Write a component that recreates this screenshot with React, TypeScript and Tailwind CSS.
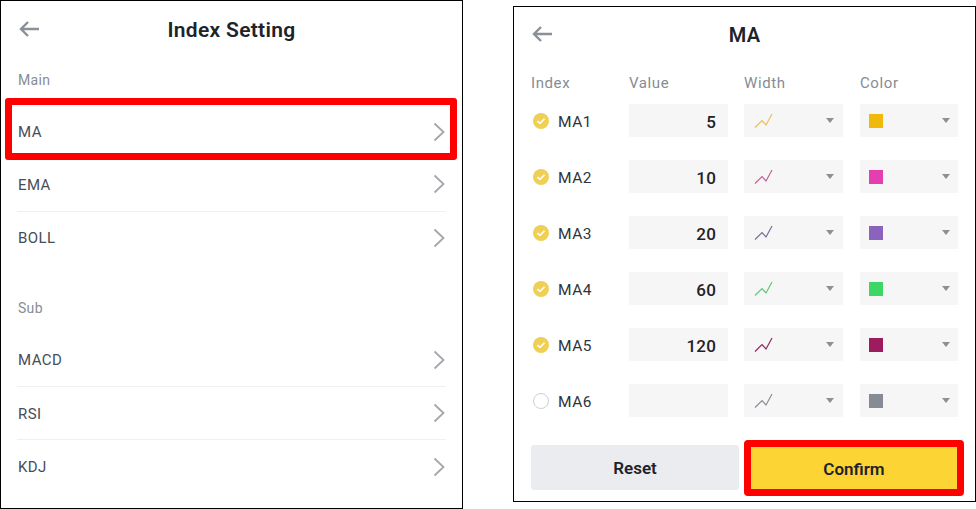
const font = "[font-family:'Roboto','Liberation_Sans',sans-serif]";

function Back() {
  return (
    <svg width="22" height="18" viewBox="0 0 22 18" fill="none" stroke="#8a8f98" strokeWidth="2.4">
      <path d="M21 9H3M10 2L3 9l7 7" />
    </svg>
  );
}

function Chevron() {
  return (
    <svg width="12" height="20" viewBox="0 0 12 20" fill="none" stroke="#a3a6ab" strokeWidth="1.8">
      <path d="M1.5 1.5L10.5 10L1.5 18.5" />
    </svg>
  );
}

function Item({ label, line, boxed }: { label: string; line?: boolean; boxed?: boolean }) {
  return (
    <div className="relative h-[53.3px] mx-[16px]">
      <div className={`h-full flex items-center justify-between pl-[1px] pr-[1px] ${line ? "border-b border-[#f0f0f0]" : ""}`}>
        <span className="pt-[1px] text-[15px] tracking-[0.4px] text-[#474d57]">{label}</span>
        <Chevron />
      </div>
      {boxed && (
        <div className="absolute left-[-12px] right-[-11px] top-[-7px] bottom-[-2px] border-[7px] border-[#fe0000] rounded-[3px]" />
      )}
    </div>
  );
}

function Check({ on }: { on: boolean }) {
  if (!on) return <div className="w-[16px] h-[16px] rounded-full border border-[#cdd0d4] bg-white" />;
  return (
    <svg width="16" height="16" viewBox="0 0 16 16">
      <circle cx="8" cy="8" r="8" fill="#efcf55" />
      <path d="M4.5 8.2L7 10.5L11.5 5.8" fill="none" stroke="#fff" strokeWidth="1.6" />
    </svg>
  );
}

function Caret() {
  return (
    <svg width="8" height="5" viewBox="0 0 8 5">
      <path d="M0 0H8L4 5Z" fill="#8b8f96" />
    </svg>
  );
}

function Row({ name, value, on, line, swatch }: { name: string; value: string; on: boolean; line: string; swatch: string }) {
  return (
    <div className="flex items-center h-[33px] mb-[23px]">
      <div className="w-[98px] flex items-center">
        <div className="ml-[2px] mr-[9px] flex"><Check on={on} /></div>
        <span className="pt-[5px] text-[15.5px] tracking-[0.5px] text-[#2f343c]">{name}</span>
      </div>
      <div className="w-[99px] h-[33px] bg-[#f6f6f6] flex items-center justify-end pt-[5px] pr-[12px] text-[17px] tracking-[0.2px] text-[#1e2329] font-medium">
        {value}
      </div>
      <div className="w-[99px] h-[33px] ml-[16px] bg-[#f6f6f6] flex items-center justify-between pl-[10px] pr-[9px]">
        <svg width="19" height="16" viewBox="0 0 19 16" fill="none" stroke={line} strokeWidth="1.2">
          <path d="M1 14.5L8 7.5L12 12L18 1" />
        </svg>
        <Caret />
      </div>
      <div className="w-[98px] h-[33px] ml-[17px] bg-[#f6f6f6] flex items-center justify-between pl-[9px] pr-[8px]">
        <div className="w-[14px] h-[14px]" style={{ backgroundColor: swatch }} />
        <Caret />
      </div>
    </div>
  );
}

export default function App() {
  return (
    <div className={`w-[976px] h-[509px] bg-white flex items-start overflow-hidden ${font}`}>
      <div className="w-[463px] h-[509px] shrink-0 border border-black bg-white">
        <div className="relative h-[54px] flex items-center justify-center pt-[5px]">
          <div className="absolute left-[17px] top-[19px] flex"><Back /></div>
          <span className="text-[21px] font-semibold tracking-[0.3px] text-[#1e2329]">Index Setting</span>
        </div>
        <div className="h-[50px] pl-[17px] pt-[15px] text-[14px] text-[#878c94] tracking-[0.3px]">Main</div>
        <Item label="MA" boxed />
        <Item label="EMA" line />
        <Item label="BOLL" />
        <div className="h-[69px] pl-[17px] pt-[33px] text-[14px] text-[#878c94] tracking-[0.3px]">Sub</div>
        <Item label="MACD" line />
        <Item label="RSI" line />
        <Item label="KDJ" />
      </div>
      <div className="w-[463px] h-[496px] mt-[6px] ml-[50px] shrink-0 border border-black bg-white px-[17px]">
        <div className="relative h-[55px] flex items-center justify-center">
          <div className="absolute left-0 top-[18px] flex"><Back /></div>
          <span className="text-[20px] font-semibold tracking-[0.3px] text-[#1e2329]">MA</span>
        </div>
        <div className="flex h-[42px] pt-[10px] text-[15px] tracking-[0.6px] text-[#878c94]">
          <div className="w-[98px]">Index</div>
          <div className="w-[115px]">Value</div>
          <div className="w-[116px]">Width</div>
          <div>Color</div>
        </div>
        <Row name="MA1" value="5" on line="#e8c15a" swatch="#f0b90b" />
        <Row name="MA2" value="10" on line="#c65f9f" swatch="#e33fb0" />
        <Row name="MA3" value="20" on line="#77709a" swatch="#8a63bd" />
        <Row name="MA4" value="60" on line="#5fc878" swatch="#3ed664" />
        <Row name="MA5" value="120" on line="#8f2a5e" swatch="#9c1c5e" />
        <Row name="MA6" value="" on={false} line="#8a8f98" swatch="#858a94" />
        <div className="flex items-start mt-[1px]">
          <button className="w-[208px] h-[45px] mt-[5px] pt-[3px] shrink-0 rounded-[3px] bg-[#eaecef] text-[17px] font-semibold text-[#1e2329]">Reset</button>
          <button className="w-[220px] h-[56px] ml-[5px] pt-[3px] shrink-0 rounded-[4px] border-[7px] border-[#fe0000] bg-[#fcd535] text-[17px] font-semibold text-[#1e2329]">Confirm</button>
        </div>
      </div>
    </div>
  );
}
